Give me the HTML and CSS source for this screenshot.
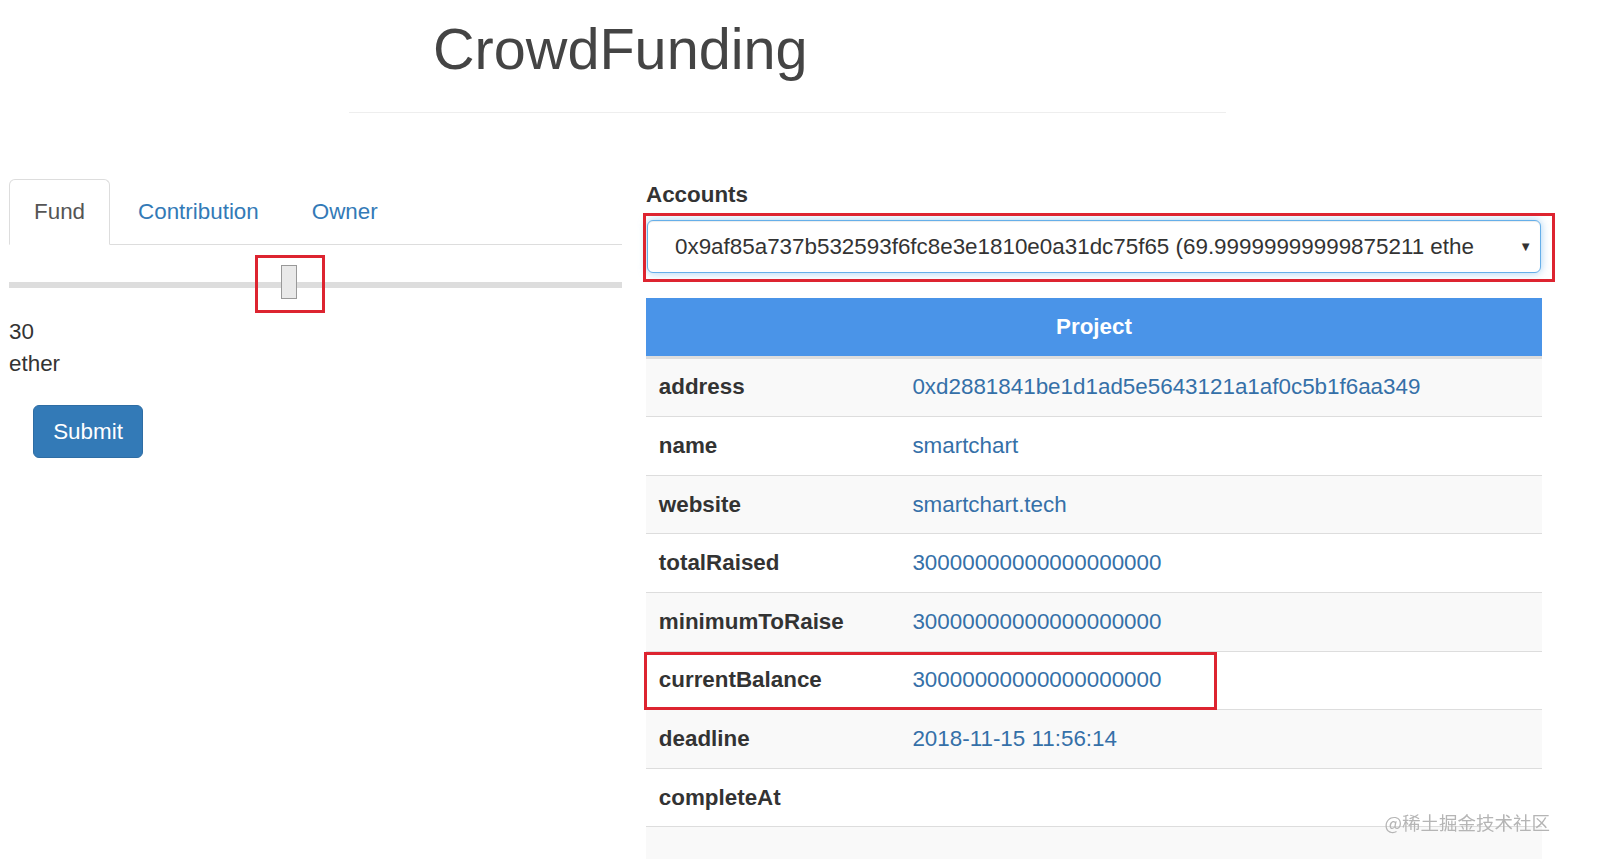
FILE: index.html
```html
<!DOCTYPE html>
<html lang="en">

<head>
    <meta charset="UTF-8">
    <meta name="viewport" content="width=device-width, initial-scale=1.0">
    <title>CrowdFunding</title>
    <link rel="stylesheet" href="styles.css">
</head>

<body>
    <div class="page-header">
        <h1>CrowdFunding</h1>
    </div>

    <div class="main">
        <div class="left">
            <ul class="nav-tabs">
                <li class="active"><a href="#">Fund</a></li>
                <li><a href="#">Contribution</a></li>
                <li><a href="#">Owner</a></li>
            </ul>

            <div class="slider">
                <input type="range" min="0" max="100" step="0.1" value="45.6">
                <span class="mark mark-thumb"></span>
            </div>
            <div class="amount">30</div>
            <div class="amount">ether</div>

            <button class="btn-submit">Submit</button>
        </div>

        <div class="right">
            <label class="field-label" for="accounts">Accounts</label>
            <div class="select-wrap">
                <select id="accounts" class="form-control">
                    <option>0x9af85a737b532593f6fc8e3e1810e0a31dc75f65 (69.99999999999875211 ethe</option>
                </select>
                <span class="caret">&#9660;</span>
                <span class="mark mark-select"></span>
            </div>

            <table class="project">
                <thead>
                    <tr>
                        <th colspan="2">Project</th>
                    </tr>
                </thead>
                <tbody>
                    <tr>
                        <td class="key">address</td>
                        <td class="val">0xd2881841be1d1ad5e5643121a1af0c5b1f6aa349</td>
                    </tr>
                    <tr>
                        <td class="key">name</td>
                        <td class="val">smartchart</td>
                    </tr>
                    <tr>
                        <td class="key">website</td>
                        <td class="val">smartchart.tech</td>
                    </tr>
                    <tr>
                        <td class="key">totalRaised</td>
                        <td class="val">30000000000000000000</td>
                    </tr>
                    <tr>
                        <td class="key">minimumToRaise</td>
                        <td class="val">30000000000000000000</td>
                    </tr>
                    <tr>
                        <td class="key marked">currentBalance<span class="mark mark-row"></span></td>
                        <td class="val">30000000000000000000</td>
                    </tr>
                    <tr>
                        <td class="key">deadline</td>
                        <td class="val">2018-11-15 11:56:14</td>
                    </tr>
                    <tr>
                        <td class="key">completeAt</td>
                        <td class="val"></td>
                    </tr>
                    <tr>
                        <td class="key">&nbsp;</td>
                        <td class="val"></td>
                    </tr>
                </tbody>
            </table>
        </div>
    </div>

    <div class="watermark">@稀土掘金技术社区</div>
</body>

</html>
```

FILE: styles.css
```css
body {
    margin: 0;
    padding: 0;
    font-family: "Liberation Sans", Arial, "Noto Sans CJK SC", sans-serif;
    font-size: 22.4px;
    line-height: 32px;
    color: #333;
    background-color: #fff;
}

.page-header {
    width: 877px;
    margin-left: 349px;
    border-bottom: 1px solid #eee;
}

.page-header h1 {
    margin: 0;
    padding: 17px 0 31px 84px;
    font-size: 57.6px;
    line-height: 64px;
    font-weight: normal;
    color: #444;
}

.main {
    display: flex;
    align-items: flex-start;
    padding-left: 9px;
    margin-top: 66px;
}

.left {
    width: 613px;
}

.right {
    width: 896px;
    margin-left: 24px;
}

/* tabs */
.nav-tabs {
    display: flex;
    list-style: none;
    margin: 0;
    padding: 0;
    border-bottom: 1px solid #ddd;
}

.nav-tabs li {
    margin-right: 3px;
    margin-bottom: -1px;
}

.nav-tabs a {
    display: block;
    padding: 16px 24px;
    line-height: 32px;
    color: #337ab7;
    text-decoration: none;
    border: 1px solid transparent;
    border-radius: 6px 6px 0 0;
}

.nav-tabs li.active a {
    color: #555;
    background-color: #fff;
    border-color: #ddd #ddd transparent;
}

/* slider */
.slider {
    position: relative;
    height: 34px;
    margin: 23px 0 14px;
}

.slider input[type="range"] {
    -webkit-appearance: none;
    appearance: none;
    display: block;
    width: 100%;
    height: 34px;
    margin: 0;
    background: transparent;
}

.slider input[type="range"]::-webkit-slider-runnable-track {
    height: 6px;
    background-color: #ddd;
    border: none;
}

.slider input[type="range"]::-webkit-slider-thumb {
    -webkit-appearance: none;
    width: 16px;
    height: 34px;
    margin-top: -17px;
    background-color: #e9e9e9;
    border: 1px solid #999;
    box-sizing: border-box;
}

.amount {
    color: #333;
}

.btn-submit {
    display: block;
    margin: 25px 0 0 24px;
    padding: 9.6px 19.2px;
    font-family: inherit;
    font-size: 22.4px;
    line-height: 32px;
    color: #fff;
    background-color: #337ab7;
    border: 1px solid #2e6da4;
    border-radius: 6px;
    cursor: pointer;
}

/* accounts */
.field-label {
    display: block;
    font-weight: bold;
    margin-bottom: 9px;
}

.select-wrap {
    position: relative;
    margin-left: 1px;
    width: 894px;
    margin-bottom: 25px;
}

.form-control {
    -webkit-appearance: none;
    appearance: none;
    display: block;
    width: 100%;
    height: 53px;
    padding: 0 60px 0 27px;
    font-family: inherit;
    font-size: 22.4px;
    color: #333;
    background-color: #fff;
    border: 1px solid #66afe9;
    border-radius: 6px;
    box-shadow: inset 0 1px 1px rgba(0, 0, 0, .075), 0 0 8px rgba(102, 175, 233, .6);
    outline: none;
    box-sizing: border-box;
}

.caret {
    position: absolute;
    right: 9px;
    top: 0;
    line-height: 53px;
    font-size: 13px;
    color: #333;
    pointer-events: none;
}

/* annotation boxes */
.mark {
    position: absolute;
    border: 3px solid #dd2430;
    box-sizing: border-box;
    pointer-events: none;
}

.mark-thumb {
    left: 246px;
    top: -13px;
    width: 70px;
    height: 58px;
}

.mark-select {
    left: -4px;
    right: -14px;
    top: -7px;
    bottom: -9px;
}

.mark-row {
    left: -2px;
    top: 0;
    width: 573px;
    height: 58px;
}

/* project table */
.project {
    width: 100%;
    border-collapse: collapse;
    border-spacing: 0;
}

.project th {
    padding: 12.8px;
    line-height: 32px;
    color: #fff;
    background-color: #4a94e8;
    text-align: center;
    font-weight: bold;
    border-bottom: 3px solid #ddd;
}

.project td {
    padding: 12.8px;
    line-height: 32px;
    border-top: 1px solid #ddd;
}

.project tbody tr:nth-child(odd) {
    background-color: #f9f9f9;
}

.project td.key {
    width: 228px;
    font-weight: bold;
    color: #333;
}

.project td.marked {
    position: relative;
}

.project td.val {
    color: #3570a8;
}

.watermark {
    position: fixed;
    right: 58px;
    bottom: 25px;
    font-size: 18.5px;
    line-height: 24px;
    color: #b5b5b5;
    font-family: "Noto Sans CJK SC", sans-serif;
}
```
